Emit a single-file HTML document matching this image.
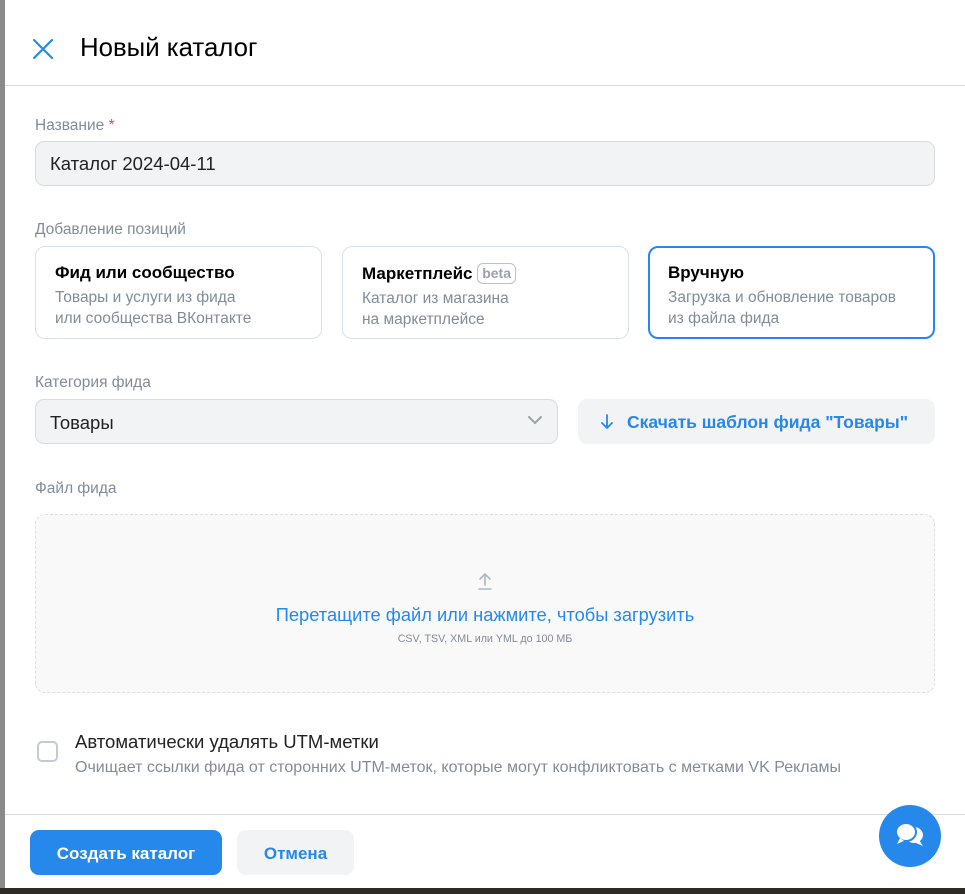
<!DOCTYPE html>
<html><head><meta charset="utf-8"><style>
*{box-sizing:border-box;margin:0;padding:0}
body{width:965px;height:894px;overflow:hidden;background:#fff;font-family:"Liberation Sans",sans-serif;position:relative;color:#000}
.abs{position:absolute}
.lbl{font-size:15.5px;color:#818c99}
.card{position:absolute;top:246px;width:287px;height:93px;border:1px solid #dce1e6;border-radius:10px;padding:15px 19px}
.card b{font-weight:bold;font-size:17px;color:#000;display:block;margin-top:1px}
.card span{display:block;font-size:15.5px;color:#818c99;line-height:21px;margin-top:4px}
</style></head><body>
<div class="abs" style="left:0;top:0;width:5px;height:894px;background:#8a8a8a"></div>
<div class="abs" style="left:0;top:888px;width:965px;height:6px;background:#2e2b27"></div>
<svg class="abs" style="left:32px;top:38px" width="22" height="22" viewBox="0 0 22 22"><path d="M2 2L20 20M20 2L2 20" stroke="#2688eb" stroke-width="2.2" stroke-linecap="round"/></svg>
<div class="abs" style="left:80px;top:34px;font-size:25.8px;color:#000">Новый каталог</div>
<div class="abs" style="left:5px;top:85px;width:960px;height:1px;background:#dcdcdc"></div>
<div class="abs lbl" style="left:35px;top:117px">Название <span style="color:#e64646">*</span></div>
<div class="abs" style="left:35px;top:141px;width:900px;height:45px;background:#f2f3f5;border:1px solid #d8dbe0;border-radius:9px;padding:11px 14px;font-size:18.5px;color:#222">Каталог 2024-04-11</div>
<div class="abs lbl" style="left:35px;top:221px">Добавление позиций</div>
<div class="card" style="left:35px"><b>Фид или сообщество</b><span>Товары и услуги из фида<br>или сообщества ВКонтакте</span></div>
<div class="card" style="left:342px"><b>Маркетплейс <span style="display:inline-block;font-size:14px;color:#99a2ad;border:1.5px solid #b8c1cc;border-radius:6px;padding:0 4px;line-height:19px;margin:0;vertical-align:1px">beta</span></b><span>Каталог из магазина<br>на маркетплейсе</span></div>
<div class="card" style="left:648px;border:2px solid #2688eb;padding:14px 18px"><b>Вручную</b><span>Загрузка и обновление товаров<br>из файла фида</span></div>
<div class="abs lbl" style="left:35px;top:374px">Категория фида</div>
<div class="abs" style="left:35px;top:399px;width:523px;height:45px;background:#f2f3f5;border:1px solid #d8dbe0;border-radius:9px;padding:12px 14px;font-size:18.5px;color:#222">Товары</div>
<svg class="abs" style="left:527px;top:415px" width="16" height="10" viewBox="0 0 16 10"><path d="M2 2l6 6 6-6" stroke="#99a2ad" stroke-width="2" fill="none" stroke-linecap="round"/></svg>
<div class="abs" style="left:578px;top:399px;width:357px;height:45px;background:#f2f3f5;border-radius:9px;padding:13px 0 0 23px;font-size:17.5px;color:#2688eb;font-weight:bold">
<svg style="vertical-align:-2px;margin-right:14px" width="12" height="16" viewBox="0 0 12 16"><path d="M6 1v13M1 9l5 5 5-5" stroke="#2688eb" stroke-width="1.8" fill="none" stroke-linecap="round"/></svg>Скачать шаблон фида "Товары"</div>
<div class="abs lbl" style="left:35px;top:480px">Файл фида</div>
<div class="abs" style="left:35px;top:514px;width:900px;height:179px;background:#f9f9fa;border:1px dashed #dce1e6;border-radius:10px"></div>
<svg class="abs" style="left:477px;top:572px" width="16" height="18" viewBox="0 0 16 18"><path d="M8 13V2M3 7l5-5 5 5M2 17h12" stroke="#aeb7c2" stroke-width="1.6" fill="none" stroke-linecap="round"/></svg>
<div class="abs" style="left:35px;top:604px;width:900px;text-align:center;font-size:18.3px;color:#2688eb">Перетащите файл или нажмите, чтобы загрузить</div>
<div class="abs" style="left:35px;top:633px;width:900px;text-align:center;font-size:10.7px;color:#818c99">CSV, TSV, XML или YML до 100 МБ</div>
<div class="abs" style="left:37px;top:741px;width:21px;height:21px;border:2px solid #c4cad2;border-radius:5px"></div>
<div class="abs" style="left:75px;top:731px;font-size:18.5px;color:#222">Автоматически удалять UTM-метки</div>
<div class="abs" style="left:75px;top:759px;font-size:16px;color:#818c99">Очищает ссылки фида от сторонних UTM-меток, которые могут конфликтовать с метками VK Рекламы</div>
<div class="abs" style="left:5px;top:814px;width:960px;height:1px;background:#dcdcdc"></div>
<div class="abs" style="left:30px;top:830px;width:192px;height:45px;background:#2688eb;border-radius:9px;color:#fff;font-weight:bold;font-size:17px;text-align:center;line-height:48px">Создать каталог</div>
<div class="abs" style="left:237px;top:830px;width:117px;height:45px;background:#f2f3f5;border-radius:9px;color:#2688eb;font-weight:bold;font-size:17px;text-align:center;line-height:48px">Отмена</div>
<div class="abs" style="left:879px;top:805px;width:62px;height:62px;border-radius:50%;background:#2688eb"></div>
<svg class="abs" style="left:893px;top:820px" width="34" height="32" viewBox="0 0 34 32"><ellipse cx="21" cy="15" rx="9" ry="8" fill="#fff"/><path d="M26 20l4 6-7-3z" fill="#fff"/><ellipse cx="13" cy="12" rx="10" ry="9" fill="#fff" stroke="#2688eb" stroke-width="2"/><path d="M7 18l-3 6 7-3z" fill="#fff"/></svg>
</body></html>
